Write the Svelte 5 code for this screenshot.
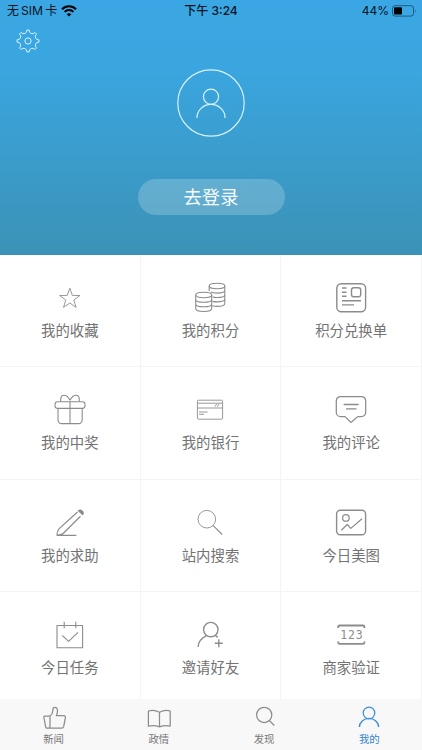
<script lang="ts">
  interface MenuItem {
    icon: string;
    label: string;
  }

  const menu: MenuItem[] = [
    { icon: 'star', label: '我的收藏' },
    { icon: 'coins', label: '我的积分' },
    { icon: 'voucher', label: '积分兑换单' },
    { icon: 'gift', label: '我的中奖' },
    { icon: 'bank', label: '我的银行' },
    { icon: 'comment', label: '我的评论' },
    { icon: 'pencil', label: '我的求助' },
    { icon: 'search', label: '站内搜索' },
    { icon: 'picture', label: '今日美图' },
    { icon: 'task', label: '今日任务' },
    { icon: 'invite', label: '邀请好友' },
    { icon: 'verify', label: '商家验证' },
  ];

  const tabs: MenuItem[] = [
    { icon: 'news', label: '新闻' },
    { icon: 'politics', label: '政情' },
    { icon: 'discover', label: '发现' },
    { icon: 'mine', label: '我的' },
  ];

  let activeTab = $state('mine');

  // gear outline: 8 teeth around the hub
  const gear = Array.from({ length: 8 }, (_, i) => {
    const p = (deg: number, r: number) => {
      const a = ((i * 45 + deg - 90) * Math.PI) / 180;
      return `${(12 + r * Math.cos(a)).toFixed(2)} ${(12 + r * Math.sin(a)).toFixed(2)}`;
    };
    return `${i ? 'L' : 'M'}${p(-6, 11)}L${p(6, 11)}L${p(10, 8.9)}Q${p(22.5, 7.7)} ${p(35, 8.9)}`;
  }).join('') + 'Z';
</script>

<div class="page">
  <header class="hero">
    <div class="status">
      <div class="carrier">
        <span>无<b class="sim">SIM</b>卡</span>
        <svg width="16" height="12" viewBox="0 0 16 12">
          <path d="M8 11.6 5.7 9.3a3.3 3.3 0 0 1 4.6 0z" />
          <path d="M3.5 6.9a6.4 6.4 0 0 1 9 0M1 4.2a10 10 0 0 1 14 0" fill="none" stroke="#000" stroke-width="2" />
        </svg>
      </div>
      <div class="clock">下午 3:24</div>
      <div class="power">
        <span>44%</span>
        <svg width="25" height="12" viewBox="0 0 25 12">
          <rect x=".5" y=".7" width="21" height="10.4" rx="2.6" fill="none" stroke="#000" stroke-opacity=".45" />
          <rect x="2" y="2.2" width="8" height="7.4" rx="1" />
          <path d="M23 4.2q1.6 1.7 0 3.4z" fill-opacity=".45" />
        </svg>
      </div>
    </div>

    <button class="settings" aria-label="设置">
      <svg width="24" height="24" viewBox="0 0 24 24">
        <path d={gear} />
        <circle cx="12" cy="12" r="3.1" />
      </svg>
    </button>

    <div class="avatar">
      <svg width="68" height="68" viewBox="0 0 68 68">
        <circle cx="34" cy="34" r="33.2" />
        <circle cx="34" cy="27.8" r="7.6" />
        <path d="M19.9 49a14.1 13.6 0 0 1 28.2 0" />
      </svg>
    </div>

    <button class="login">去登录</button>
  </header>

  <main class="grid">
    {#each menu as item}
      <div class="cell">
        <svg class="icon" width="32" height="32" viewBox="0 0 32 32">
          {#if item.icon === 'star'}
            <path class="thin" d="M15.8 7.2l2.5 7.2 7.6.1-6.1 4.6 2.3 7.3-6.3-4.4-6.3 4.4 2.3-7.3-6.1-4.6 7.6-.1z" />
          {:else if item.icon === 'coins'}
            <ellipse cx="23" cy="5" rx="7.8" ry="2.7" />
            <path d="M15.2 5v5M30.8 5v17.500c0 1.700-3.400 2.900-7.800 2.900-1.800 0-3.400-.2-4.700-.6M30.800 9.300c0 1.700-3.400 2.800-7.800 2.800-2.600 0-4.800-.4-6.300-1.100M30.800 13.700c0 1.700-3.400 2.800-7.800 2.800-1.700 0-3.200-.2-4.500-.5M30.800 18.100c0 1.700-3.400 2.800-7.800 2.800-1.700 0-3.200-.2-4.500-.5" />
            <ellipse cx="9.7" cy="14" rx="8" ry="2.7" />
            <path d="M1.7 14v13.500c0 1.700 3.500 3 8 3s8-1.300 8-3V14M1.700 18.500c0 1.700 3.500 2.800 8 2.800s8-1.100 8-2.800M1.700 23c0 1.700 3.500 2.800 8 2.800s8-1.100 8-2.800" />
          {:else if item.icon === 'voucher'}
            <rect class="bold" x="1.8" y="2.7" width="28.8" height="28" rx="4.5" />
            <rect class="bold" x="16.5" y="6.8" width="9.2" height="8.9" rx="2.2" />
            <path class="bold" d="M7 7h4.500M7 11.200h4.500M7 15.300h4.500M7 19.700h19M7 23.900h12" />
          {:else if item.icon === 'gift'}
            <rect x="1" y="8.8" width="30" height="6.6" rx="2.6" />
            <path d="M4 15.500V27a3.600 3.600 0 0 0 3.600 3.600h17A3.600 3.600 0 0 0 28.200 27V15.500M16 8.800v21.800M16 7.200C14.300 3.600 11.800 2.200 9.800 2.200 7 2.200 6.300 5.500 6.800 8.600M16 7.200c1.700-3.600 4.200-5 6.200-5 2.800 0 3.500 3.300 3 6.400" />
          {:else if item.icon === 'bank'}
            <rect class="thin" x="3.4" y="7.2" width="25.2" height="19" rx="1" />
            <path class="thin" d="M3.400 10.200h25.200M3.400 15h25.200M5 19h8.500M5 21.300h5M20.800 13.700l2.100-3M23.300 13.700l2.100-3" />
          {:else if item.icon === 'comment'}
            <path class="medium" d="M5.500 3.500h21a4.200 4.200 0 0 1 4.200 4.200v11.700a4.200 4.200 0 0 1-4.200 4.200h-3.800L16.800 28.700a1.200 1.200 0 0 1-1.600 0L10 23.600H5.500a4.200 4.200 0 0 1-4.200-4.200V7.700a4.200 4.200 0 0 1 4.200-4.200z" />
            <path class="bold" d="M8.600 11.500h15M11 15.900h10.500" />
          {:else if item.icon === 'pencil'}
            <path class="medium" d="M23.500 6 5.200 22.600q-2.200 2.200-2.200 6.600 4.200.2 6.400-2L26.500 10.300M3 29.300h19.300" />
            <path class="solid" d="M24.300 4.700l4.200 4q1.600-1.600 0-3.400-2-2-4.200-.6z" />
          {:else if item.icon === 'search'}
            <circle class="thin" cx="12.8" cy="13.2" r="8.8" />
            <path d="M19 19.400l9.200 9.100" />
          {:else if item.icon === 'picture'}
            <rect class="bold" x="1.6" y="4.2" width="29" height="24.6" rx="3.8" />
            <circle class="medium" cx="10.9" cy="11.9" r="3.3" />
            <path class="medium" d="M6.300 24.200l5.900-5.700 3.600 3.900L27 12.700" />
          {:else if item.icon === 'task'}
            <path d="M3 7.500h25.600v22.300H3zM10.200 3.800v6.500M21.800 3.800v6.500M8.200 17.400l6.400 6L24 14.400" />
          {:else if item.icon === 'invite'}
            <circle class="bold" cx="16.8" cy="11.6" r="7.2" />
            <path class="bold" d="M4.100 29c.3-5 3.500-9 8.400-11.300M21.300 17.400l2.500 2M24.800 21.200v8M20.800 25.200h8" />
          {:else if item.icon === 'verify'}
            <path class="heavy" d="M3.200 10V8.800q0-1.300 1.500-1.300h23.200q1.500 0 1.500 1.300V10M3.200 23.400v1.200q0 1.300 1.500 1.300h23.200q1.500 0 1.500-1.300v-1.200" />
            <text x="16.9" y="20.800">123</text>
          {/if}
        </svg>
        <span class="label">{item.label}</span>
      </div>
    {/each}
  </main>

  <nav class="tabs">
    {#each tabs as tab}
      <button class="tab" class:active={activeTab === tab.icon} onclick={() => (activeTab = tab.icon)}>
        <svg class="icon" width="24" height="24" viewBox="0 0 24 24">
          {#if tab.icon === 'news'}
            <path class="medium" d="M2.600 10.200h3.600q2.200 0 3.400-1.700 1.300-2 1.300-5 0-2.200 1.900-2.200 2.700 0 2.700 3.400 0 2.300-1.100 4.900h7.300q2 .3 1.700 2.100l-1.700 8.700q-.4 1.700-2 1.700H4.900q-1 0-1.200-1L1.900 11.500q-.2-1.300.7-1.300zM8 10.200v10q0 1.900-1.500 1.900" />
          {:else if tab.icon === 'politics'}
            <path class="medium" d="M12.500 6.200Q7 3.200 1.400 5v15.200q5.500-1.400 11.100.6 5.600-2 10.700-.6V5Q18 3.200 12.500 6.200v14.600" />
          {:else if tab.icon === 'discover'}
            <circle class="medium" cx="12.2" cy="8.900" r="7.600" />
            <path class="medium" d="M17.300 14.500l5 5" />
          {:else}
            <circle class="medium" cx="12" cy="7" r="5.800" />
            <path class="bold" d="M2.400 21a9.600 8.600 0 0 1 19.200 0" />
          {/if}
        </svg>
        <span>{tab.label}</span>
      </button>
    {/each}
  </nav>
</div>

<style>
  :global(body) {
    margin: 0;
  }

  .page {
    display: flex;
    flex-direction: column;
    width: 422px;
    height: 750px;
    overflow: hidden;
    background: #fff;
    font-family: Inter, "Noto Sans CJK SC", sans-serif;
  }

  button {
    padding: 0;
    border: 0;
    background: none;
    font: inherit;
    color: inherit;
  }

  svg {
    display: block;
  }

  .hero {
    display: flex;
    flex-direction: column;
    flex: none;
    height: 255px;
    align-items: center;
    background: linear-gradient(#3aa7e4 0%, #3aa6e0 25%, #3b92b6 100%);
  }

  .status {
    display: grid;
    grid-template-columns: 1fr auto 1fr;
    align-items: center;
    box-sizing: border-box;
    width: 100%;
    height: 21px;
    padding: 0 6px 0 7px;
    font-size: 12px;
    line-height: 20px;
    color: #06141c;
  }

  .carrier,
  .power {
    display: flex;
    align-items: center;
    gap: 5px;
  }

  .carrier {
    gap: 4px;
  }

  .sim {
    margin: 0 2px;
    font-size: 12.2px;
    font-weight: 400;
  }

  .clock {
    padding-right: 1px;
    font-weight: 500;
  }

  .power {
    justify-content: flex-end;
    gap: 3px;
    margin-right: -1px;
  }

  .settings {
    align-self: flex-start;
    margin: 8px 0 0 16px;
  }

  .settings svg,
  .avatar svg {
    fill: none;
    stroke: #d9f2fd;
    stroke-width: 1;
    stroke-linejoin: round;
  }

  .avatar {
    margin-top: 16px;
  }

  .avatar svg {
    stroke-width: 1.2;
  }

  .login {
    width: 147px;
    height: 36px;
    margin-top: 42px;
    border-radius: 18px;
    background: rgba(255, 255, 255, 0.2);
    color: #f4fcff;
    font-size: 18.3px;
    line-height: 36px;
  }

  .grid {
    display: grid;
    flex: none;
    grid-template-columns: repeat(3, 1fr);
    grid-auto-rows: 112.3px;
    height: 444px;
    overflow: hidden;
  }

  .cell {
    display: flex;
    flex-direction: column;
    align-items: center;
    box-sizing: border-box;
    padding-top: 26px;
    border-right: 1px solid #f4f4f4;
    border-bottom: 1px solid #f4f4f4;
  }

  .icon {
    fill: none;
    stroke: #8c8c8c;
    stroke-width: 1.1;
    stroke-linejoin: round;
  }

  .icon .thin {
    stroke-width: 0.9;
  }

  .icon .medium {
    stroke-width: 1.25;
  }

  .icon .bold {
    stroke-width: 1.4;
  }

  .icon .heavy {
    stroke-width: 1.8;
  }

  .icon .solid {
    fill: #8c8c8c;
  }

  .icon text {
    fill: #8c8c8c;
    stroke: none;
    font: 11.5px "DejaVu Sans Mono", monospace;
    letter-spacing: 0.8px;
    text-anchor: middle;
  }

  .label {
    margin-top: 7px;
    color: #737373;
    font-size: 14.4px;
    line-height: 22px;
  }

  .tabs {
    display: grid;
    grid-template-columns: repeat(4, 1fr);
    flex: 1;
    padding-left: 1px;
    background: #f8f8f8;
  }

  .tab {
    display: flex;
    flex-direction: column;
    align-items: center;
    padding-top: 7px;
    color: #777;
    font-size: 10.4px;
    line-height: 16px;
  }

  .tab span {
    margin-top: 2px;
  }

  .tab.active {
    color: #3585cf;
  }

  .tab.active .icon {
    stroke: #3e8fd6;
  }
</style>
